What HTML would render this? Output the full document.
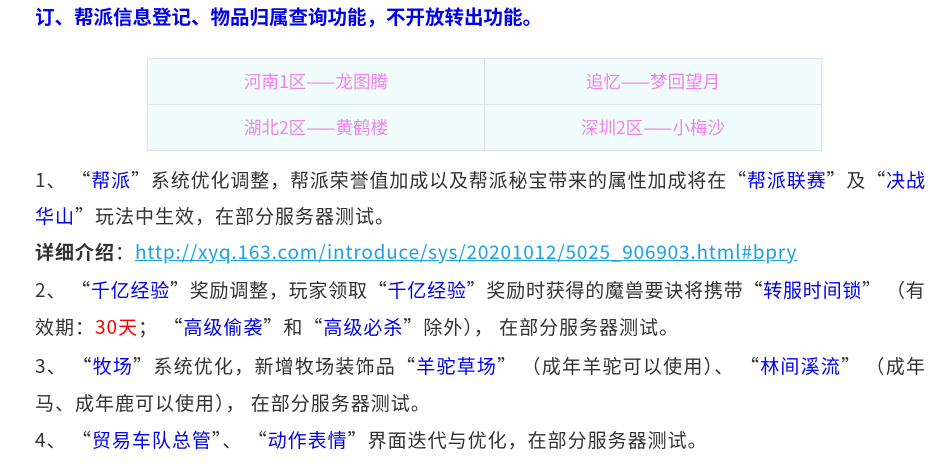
<!DOCTYPE html>
<html><head><meta charset="utf-8"><style>
body{margin:0;width:934px;height:472px;background:#fff;overflow:hidden;font-family:"Noto Sans CJK SC","Liberation Sans",sans-serif;color:#333;}
.t{position:absolute;left:35px;top:2px;font-size:19.5px;font-weight:bold;color:#0000ee;white-space:nowrap;line-height:28px;}
table{position:absolute;left:147px;top:58px;border-collapse:collapse;}
td{width:336px;height:45px;border:1px solid #dde3e6;background:#f1fcfd;color:#ee82ee;text-align:center;font-size:17.5px;padding:0;}
.l{position:absolute;left:35px;width:890px;font-size:19px;white-space:nowrap;line-height:26px;letter-spacing:1px;}
.j{text-align:justify;text-align-last:justify;letter-spacing:0;}
.b{color:#0000ee}
a{color:#1ba0e1;text-decoration:underline;letter-spacing:0.8px}
.r{color:#f00}
</style></head><body>
<div class="t">订、帮派信息登记、物品归属查询功能，不开放转出功能。</div>
<table><tr><td>河南1区——龙图腾</td><td>追忆——梦回望月</td></tr><tr><td>湖北2区——黄鹤楼</td><td>深圳2区——小梅沙</td></tr></table>
<div class="l j" style="top:167px">1、 “<span class="b">帮派</span>”系统优化调整，帮派荣誉值加成以及帮派秘宝带来的属性加成将在“<span class="b">帮派联赛</span>”及“<span class="b">决战</span></div>
<div class="l" style="top:203px"><span class="b">华山</span>”玩法中生效，在部分服务器测试。</div>
<div class="l" style="top:239px"><b>详细介绍</b>：<a>http://xyq.163.com/introduce/sys/20201012/5025_906903.html#bpry</a></div>
<div class="l j" style="top:277px">2、 “<span class="b">千亿经验</span>”奖励调整，玩家领取“<span class="b">千亿经验</span>”奖励时获得的魔兽要诀将携带“<span class="b">转服时间锁</span>” （有</div>
<div class="l" style="top:314px">效期：<span class="r">30天</span>； “<span class="b">高级偷袭</span>”和“<span class="b">高级必杀</span>”除外）， 在部分服务器测试。</div>
<div class="l j" style="top:353px">3、 “<span class="b">牧场</span>”系统优化，新增牧场装饰品“<span class="b">羊驼草场</span>” （成年羊驼可以使用）、 “<span class="b">林间溪流</span>” （成年</div>
<div class="l" style="top:390px">马、成年鹿可以使用）， 在部分服务器测试。</div>
<div class="l" style="top:427px">4、 “<span class="b">贸易车队总管</span>”、 “<span class="b">动作表情</span>”界面迭代与优化，在部分服务器测试。</div>
</body></html>
